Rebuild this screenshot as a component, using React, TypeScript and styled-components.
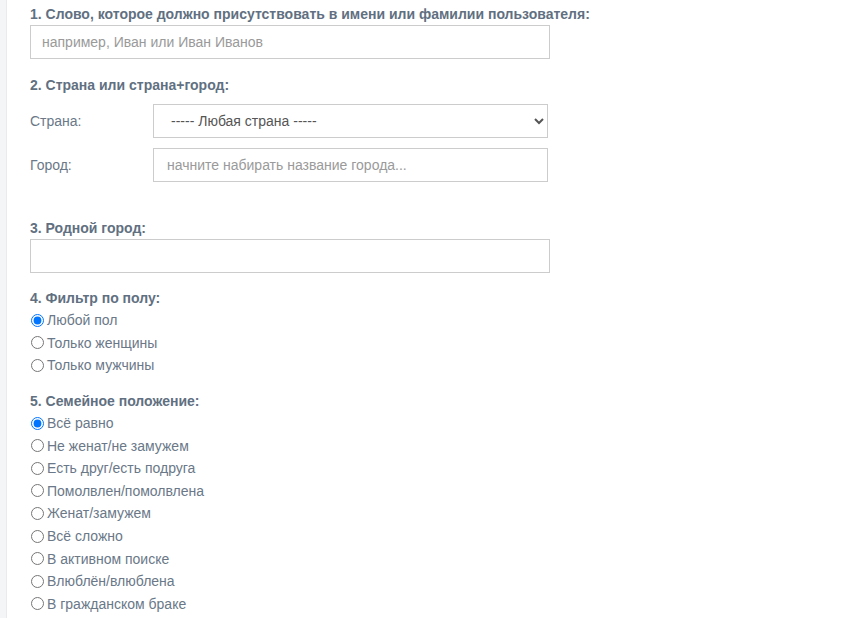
import React from 'react';
import styled, { createGlobalStyle } from 'styled-components';

const Global = createGlobalStyle`
    body {
        margin: 0;
        background: #ffffff;
        font-family: "Liberation Sans", Arial, sans-serif;
    }
`;

const Page = styled.div`
        display: flex;
        min-height: 618px;
    `;

const Strip = styled.div`
        width: 6px;
        background: #f4f5f7;
        border-right: 1px solid #e9eaec;
    `;

const Form = styled.form`
        flex: 1;
        padding: 4px 0 0 23px;
    `;

const Heading = styled.div<{ $gap?: number }>`
        font-size: 14px;
        line-height: 20px;
        font-weight: bold;
        color: #617081;
        margin-top: ${props => props.$gap || 0}px;
    `;

const TextInput = styled.input<{ $width: number }>`
        display: block;
        box-sizing: border-box;
        width: ${props => props.$width}px;
        height: 34px;
        margin: 1px 0 0 0;
        padding: 6px 11px;
        border: 1px solid #cccccc;
        border-radius: 0;
        font-family: "Liberation Sans", Arial, sans-serif;
        font-size: 14px;
        color: #555;
        outline: none;
        &::placeholder {
            color: #9a9a9a;
        }
    `;

const Row = styled.div<{ $gap: number }>`
        display: flex;
        align-items: center;
        margin-top: ${props => props.$gap}px;
    `;

const RowLabel = styled.label`
        width: 123px;
        font-size: 14px;
        color: #6a7888;
    `;

const Select = styled.select`
        box-sizing: border-box;
        width: 395px;
        height: 34px;
        padding: 6px 13px;
        border: 1px solid #cccccc;
        border-radius: 0;
        background: #fff;
        font-family: "Liberation Sans", Arial, sans-serif;
        font-size: 14px;
        color: #555;
        outline: none;
    `;

const RowInput = styled(TextInput)`
        margin: 0;
        padding: 6px 13px;
    `;

const RadioList = styled.div`
        display: flex;
        flex-direction: column;
        margin-top: 1px;
    `;

const Option = styled.label`
        display: flex;
        align-items: center;
        height: 22.6px;
        font-size: 14px;
        color: #6a7888;
        input {
            margin: 0 3px 0 1px;
            width: 13px;
            height: 13px;
        }
    `;

const gender = ['Любой пол', 'Только женщины', 'Только мужчины'];

const family = [
    'Всё равно',
    'Не женат/не замужем',
    'Есть друг/есть подруга',
    'Помолвлен/помолвлена',
    'Женат/замужем',
    'Всё сложно',
    'В активном поиске',
    'Влюблён/влюблена',
    'В гражданском браке',
];

function Radios({ name, items }: { name: string; items: string[] }) {
    return (
        <RadioList>
            {items.map((item, i) => (
                <Option key={item}>
                    <input type="radio" name={name} defaultChecked={i === 0} />
                    {item}
                </Option>
            ))}
        </RadioList>
    );
}

export default function App() {
    return (
        <Page>
            <Global />
            <Strip />
            <Form>
                <Heading>1. Слово, которое должно присутствовать в имени или фамилии пользователя:</Heading>
                <TextInput $width={520} placeholder="например, Иван или Иван Иванов" />

                <Heading $gap={16}>2. Страна или страна+город:</Heading>
                <Row $gap={9}>
                    <RowLabel>Страна:</RowLabel>
                    <Select defaultValue="0">
                        <option value="0">----- Любая страна -----</option>
                    </Select>
                </Row>
                <Row $gap={10}>
                    <RowLabel>Город:</RowLabel>
                    <RowInput $width={395} placeholder="начните набирать название города..." />
                </Row>

                <Heading $gap={36}>3. Родной город:</Heading>
                <TextInput $width={520} />

                <Heading $gap={15}>4. Фильтр по полу:</Heading>
                <Radios name="sex" items={gender} />

                <Heading $gap={14}>5. Семейное положение:</Heading>
                <Radios name="family" items={family} />
            </Form>
        </Page>
    );
}
